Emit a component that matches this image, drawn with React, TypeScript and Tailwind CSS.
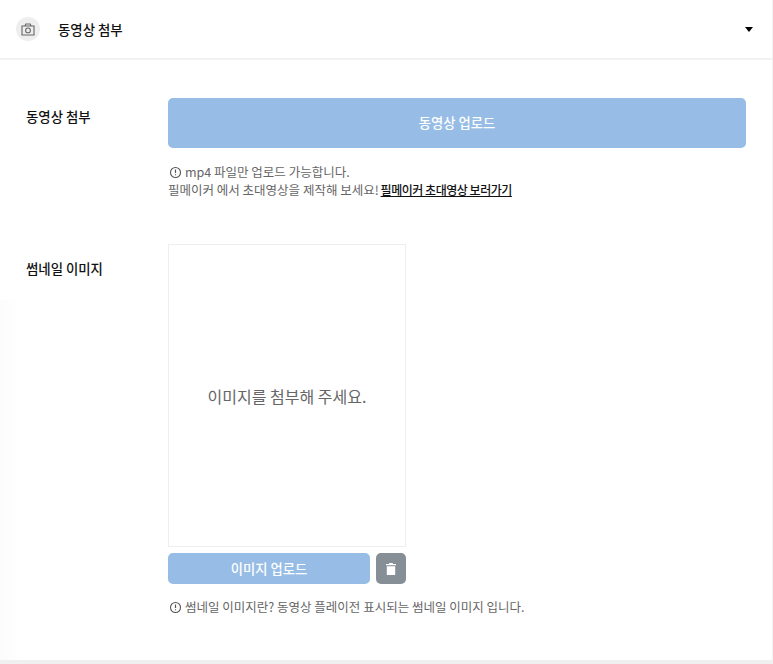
import React from 'react';

const font = { fontFamily: '"Noto Sans CJK KR", Inter, sans-serif' };

const InfoIcon: React.FC = () => (
  <svg width="13" height="13" viewBox="0 0 13 13" fill="none" className="shrink-0 ml-px">
    <circle cx="6.5" cy="6.5" r="5" stroke="#555" strokeWidth="1.1" />
    <path d="M6.5 3.6v3.4M6.5 8.2v1" stroke="#555" strokeWidth="1.2" />
  </svg>
);

const CameraIcon: React.FC = () => (
  <svg width="14" height="13" viewBox="0 0 14 13" fill="none">
    <path d="M1 3h12v9H1zM4 3l.8-2h4.4L10 3" stroke="#666" strokeWidth="1.1" />
    <circle cx="7" cy="7.4" r="2.4" stroke="#666" strokeWidth="1.1" />
  </svg>
);

const TrashIcon: React.FC = () => (
  <svg width="10" height="12" viewBox="0 0 10 12" fill="#fff">
    <path d="M3.4 0h3.2l.5 1H10v1.3H0V1h2.9zM.8 3.2h8.4V12H.8z" />
  </svg>
);

const App: React.FC = () => {
  return (
    <div className="relative w-[773px] h-[664px] overflow-hidden bg-white" style={font}>
      <div className="h-[60px] flex items-center pl-4 pr-5 border-b-2 border-[#f2f2f2]">
        <div className="w-6 h-6 rounded-full bg-[#eeeeee] flex items-center justify-center">
          <CameraIcon />
        </div>
        <span className="ml-[18px] text-[13.4px] font-medium text-[#111]">동영상 첨부</span>
        <div className="ml-auto w-0 h-0 border-l-[4px] border-r-[4px] border-t-[5px] border-l-transparent border-r-transparent border-t-black" />
      </div>

      <div className="flex pt-[38px] pl-[26px] pr-[27px]">
        <div className="w-[142px] text-[13.4px] font-medium text-[#111] leading-[36px]">동영상 첨부</div>
        <div className="flex-1">
          <div className="h-[50px] rounded-[5px] bg-[#97bde6] flex items-center justify-center text-white text-[13.3px] font-medium">
            동영상 업로드
          </div>
          <div className="mt-[15px] text-[12.5px] leading-[18px] text-[#666]">
            <div className="flex items-center gap-[3px]">
              <InfoIcon />
              <span>mp4 파일만 업로드 가능합니다.</span>
            </div>
            <div>
              필메이커 에서 초대영상을 제작해 보세요!{' '}
              <span className="-ml-px text-[#111] text-[12px] tracking-[-0.47px] font-medium underline">필메이커 초대영상 보러가기</span>
            </div>
          </div>
        </div>
      </div>

      <div className="flex pt-[45px] pl-[26px] pr-[27px]">
        <div className="w-[142px] text-[13.4px] font-medium text-[#111] leading-[48px]">썸네일 이미지</div>
        <div className="flex-1">
          <div className="w-[238px] h-[303px] border border-[#eeeeee] flex items-center justify-center text-[16px] text-[#666]">
            이미지를 첨부해 주세요.
          </div>
          <div className="w-[238px] mt-[6px] flex gap-[6px]">
            <div className="flex-1 h-[31px] rounded-[5px] bg-[#97bde6] flex items-center justify-center text-white text-[13.3px] font-medium">
              이미지 업로드
            </div>
            <div className="w-[30px] h-[31px] rounded-[5px] bg-[#868e96] flex items-center justify-center">
              <TrashIcon />
            </div>
          </div>
          <div className="mt-[14px] flex items-center gap-[3px] text-[12.5px] leading-[18px] text-[#666]">
            <InfoIcon />
            <span>썸네일 이미지란? 동영상 플레이전 표시되는 썸네일 이미지 입니다.</span>
          </div>
        </div>
      </div>

      <div className="absolute left-0 right-0 bottom-0 h-[4px] bg-[#f0f0f0]" />
      <div className="absolute left-0 top-[300px] bottom-[4px] w-[20px] bg-gradient-to-r from-[#fcfcfc] to-white" />
      <div className="absolute top-0 bottom-0 right-0 w-px bg-[#f2f2f2]" />
    </div>
  );
};

export default App;
